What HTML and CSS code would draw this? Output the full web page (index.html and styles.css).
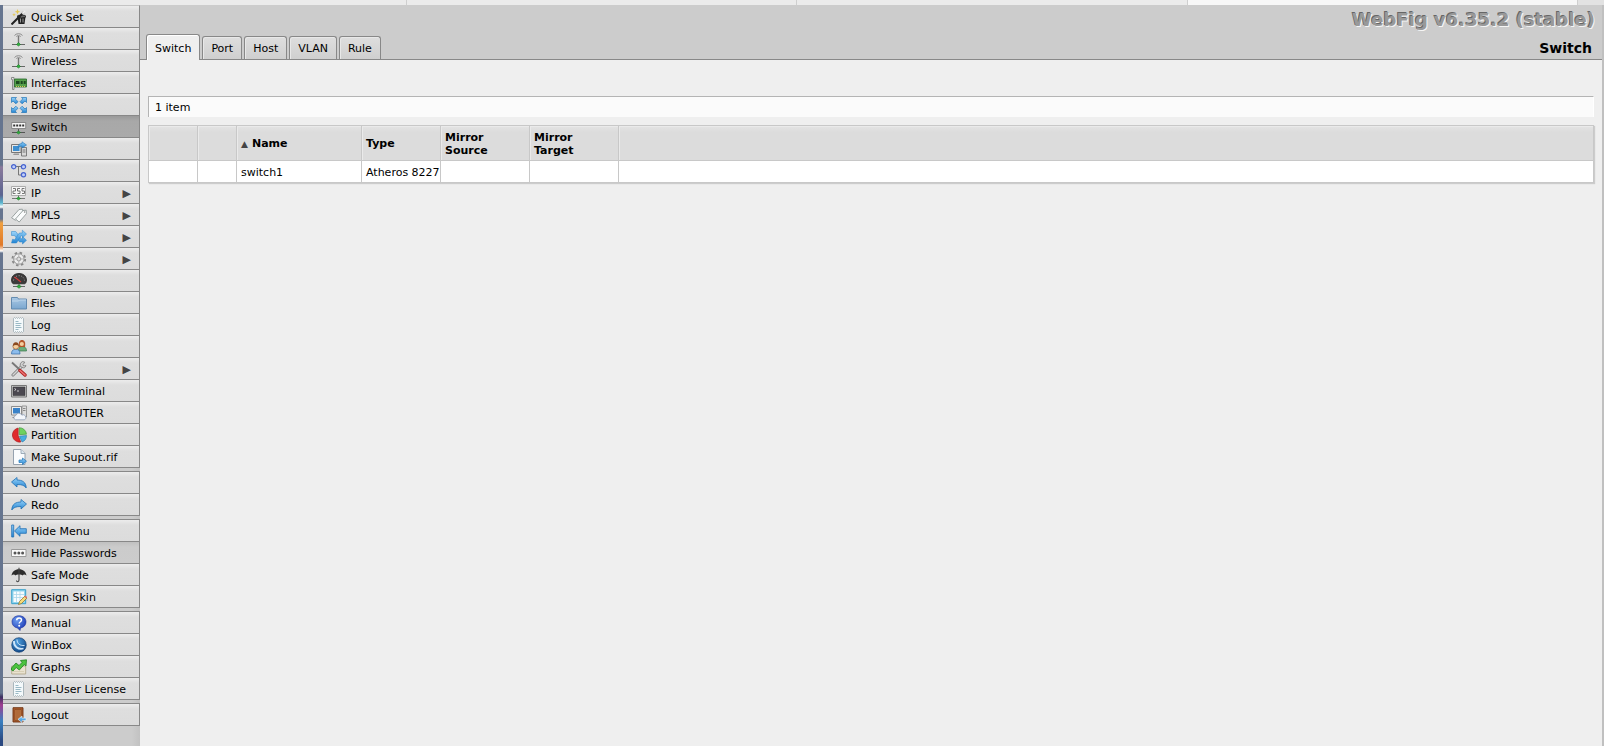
FILE: index.html
```
<!DOCTYPE html>
<html lang="en">
<head>
    <meta charset="UTF-8">
    <meta name="viewport" content="width=device-width, initial-scale=1.0">
    <title>WebFig - Switch</title>
    <link rel="stylesheet" href="styles.css">
</head>
<body>

    <!-- shared gradients and icons -->
    <svg class="defs" aria-hidden="true">
        <defs>
            <linearGradient id="blue" x1="0" y1="0" x2="0" y2="1">
                <stop offset="0" stop-color="#9bd4fa"/>
                <stop offset="1" stop-color="#2384d2"/>
            </linearGradient>
            <linearGradient id="folder" x1="0" y1="0" x2="0" y2="1">
                <stop offset="0" stop-color="#a9c8e4"/>
                <stop offset="1" stop-color="#7ba7cf"/>
            </linearGradient>
            <radialGradient id="ball" cx=".35" cy=".3" r=".8">
                <stop offset="0" stop-color="#6d9df0"/>
                <stop offset="1" stop-color="#1430b0"/>
            </radialGradient>
            <radialGradient id="globe" cx=".4" cy=".3" r=".8">
                <stop offset="0" stop-color="#4fa0e0"/>
                <stop offset="1" stop-color="#0b3f80"/>
            </radialGradient>
        </defs>
        <symbol id="i-antenna" viewBox="0 0 16 16">
            <path d="M3.500 4.500a4.800 4 0 0 1 8 0M5.300 5.500a2.800 2.300 0 0 1 4.400 0" fill="none" stroke="#8c8c8c" stroke-width="1"/>
            <path d="M7.500 5v8" stroke="#777" stroke-width="1.400"/>
            <path d="M1 13.500h13" stroke="#666"/>
            <path d="M5.500 13.500l2-2 2 2-2 1.500z" fill="#2fae3c" stroke="#1b7a28" stroke-width=".6"/>
        </symbol>
        <symbol id="i-log" viewBox="0 0 16 16">
            <path d="M2.500 1.500l1-1 1 1 1-1 1 1 1-1 1 1 1-1 1 1 1-1 1 1v13l-1 1-1-1-1 1-1-1-1 1-1-1-1 1-1-1-1 1-1-1z" fill="#f4f9fb" stroke="#9aa9b0" stroke-width=".8"/>
            <path d="M4.500 4.500h3M4.500 6.500h6M4.500 8.500h5M4.500 10.500h6M4.500 12.500h3" stroke="#8fb0bd" stroke-width=".9"/>
        </symbol>
        <symbol id="i-undo" viewBox="0 0 16 16">
            <path d="M.5 7L6 2.500V5c5.200 0 9 2 9.200 8-1.500-2.500-4.200-3.500-9.200-3.500V12z" fill="url(#blue)" stroke="#1e6eb4" stroke-width=".8" stroke-linejoin="round"/>
        </symbol>
    </svg>

    <div class="browser-tabs">
        <span class="bt bt-first"></span>
        <span class="bt"></span>
        <span class="bt"></span>
        <span class="bt bt-active"></span>
        <span class="bt bt-end"></span>
    </div>

    <div class="page">
        <nav class="menu">
            <div class="group">
                <a class="item" href="#quickset"><svg class="icon" viewBox="0 0 16 16"><path d="M6.500 7.500h8l-1 7.500h-6z" fill="#222"/><ellipse cx="10.500" cy="7.500" rx="4.500" ry="1.400" fill="#666" stroke="#111" stroke-width=".7"/><path d="M.5 15.500L13 3" stroke="#222" stroke-width="2"/><path d="M11.300 4.700L14 2" stroke="#eee" stroke-width="2"/><path d="M9.500 9.500v4M12 9.500v4" stroke="#999"/><path d="M6.500 0l.7 2 2 .7-2 .7-.7 2-.7-2-2-.7 2-.7zM3 4l.5 1.300 1.300.5-1.300.5L3 7.600l-.5-1.300-1.300-.5 1.300-.5z" fill="#e4c64c"/></svg>Quick Set</a>
                <a class="item" href="#capsman"><svg class="icon"><use href="#i-antenna"/></svg>CAPsMAN</a>
                <a class="item" href="#wireless"><svg class="icon"><use href="#i-antenna"/></svg>Wireless</a>
                <a class="item" href="#interfaces"><svg class="icon" viewBox="0 0 16 16"><path d="M.5 2.500h2.500v12H1.500v-10h-1z" fill="#e8e8e8" stroke="#777" stroke-width=".8"/><path d="M3.500 4h12v8h-12z" fill="#55a04b" stroke="#24682a" stroke-width=".8"/><path d="M5 6h3.500v3H5zM9.700 6h2v3h-2zM12.700 6h2v3h-2z" fill="#1d4a20"/><path d="M5 11.500h9" stroke="#d9c85a" stroke-dasharray="1 1"/></svg>Interfaces</a>
                <a class="item" href="#bridge"><svg class="icon" viewBox="0 0 16 16"><g fill="url(#blue)" stroke="#2375b8" stroke-width=".7"><path d="M.5.500h5L4.200 1.900 7 4.700 4.900 6.800 2 4 .5 5.500z"/><path d="M15.500.500v5L14 4l-2.900 2.800L9 4.700l2.800-2.800L10.500.500z"/><path d="M.5 15.500v-5L2 12l2.900-2.800L7 11.300l-2.800 2.800 1.300 1.400z"/><path d="M15.500 15.500h-5l1.300-1.400L9 11.300l2.100-2.100L14 12l1.500-1.500z"/></g></svg>Bridge</a>
                <a class="item item-active" href="#switch"><svg class="icon" viewBox="0 0 16 16"><path d="M.7 3.500h14v6H.7z" fill="#f5f5f5" stroke="#777" stroke-width=".8"/><path d="M2.200 6.500h11" stroke="#333" stroke-width="2" stroke-dasharray="2 1"/><path d="M7.500 10v3M1 13.500h13" stroke="#555"/><path d="M5.500 13.500l2-1.500 2 1.500-2 1.500z" fill="#2fae3c" stroke="#1b7a28" stroke-width=".6"/></svg>Switch</a>
                <a class="item" href="#ppp"><svg class="icon" viewBox="0 0 16 16"><path d="M.5 3.500h9.500v8H.5z" fill="#e6e6e6" stroke="#777"/><path d="M2 5h6.500v5H2z" fill="#3d8fd0"/><path d="M3 12.500h5v1.500H2z" fill="#999"/><path d="M10.500 6.500h5v8.500h-5z" fill="#d8d8d8" stroke="#666" stroke-width=".8"/><path d="M11.500 9h3M11.500 11h3" stroke="#777"/><path d="M7 6.500c0-3 1.500-4 4-4V.800L15.500 4 11 7V5.200c-1.500 0-2.500.3-4 1.300z" fill="url(#blue)" stroke="#2375b8" stroke-width=".6"/></svg>PPP</a>
                <a class="item" href="#mesh"><svg class="icon" viewBox="0 0 16 16"><path d="M5 3.500h5M7.500 3.500v8.500h3" fill="none" stroke="#777"/><g fill="#c3d0f8" stroke="#4663cf" stroke-width="1.200"><circle cx="2.700" cy="3.700" r="2.100"/><circle cx="12.500" cy="3.700" r="2.100"/><circle cx="12.500" cy="11.700" r="2.100"/></g></svg>Mesh</a>
                <a class="item" href="#ip"><svg class="icon" viewBox="0 0 16 16"><path d="M.5 1.500h14v9H.5z" fill="#f7f7f7" stroke="#a5a5a5" stroke-width=".9"/><path d="M2 3.500h2.500v2.500H2v2.500h2.500M9 3.500H6.500V6H9v2.500H6.500M13.500 3.500H11V6h2.500v2.500H11" fill="none" stroke="#666" stroke-width=".9"/><path d="M7.500 10.500v3M1 13.500h13" stroke="#777"/><path d="M5.500 13.500l2-1.500 2 1.500-2 1.500z" fill="#2fae3c" stroke="#1b7a28" stroke-width=".6"/></svg>IP<span class="more">▶</span></a>
                <a class="item" href="#mpls"><svg class="icon" viewBox="0 0 16 16"><path d="M.6 10.800L8 2.500l3.300-.3L12 5l-7.500 8.300z" fill="#f7f9f9" stroke="#87908f" stroke-width=".8" stroke-linejoin="round"/><path d="M4.500 12L12 3.500l3.200-.3.200 3.500L8.200 15z" fill="#fcfdfd" stroke="#87908f" stroke-width=".8" stroke-linejoin="round"/><circle cx="13.600" cy="5" r=".8" fill="#888"/></svg>MPLS<span class="more">▶</span></a>
                <a class="item" href="#routing"><svg class="icon" viewBox="0 0 16 16"><g fill="url(#blue)" stroke="#2b84c8" stroke-width=".5"><path d="M.5 2.500h4.200l5.600 7.200h1.200V7.500l4 3.800-4 3.700v-2H8.500L3.500 6.500h-3z"/><path d="M.5 14l1-3.800 2.200.5L8.300 4h3V1.200L15.500 5l-4 3.800v-2H9.900L5.500 14z"/></g></svg>Routing<span class="more">▶</span></a>
                <a class="item" href="#system"><svg class="icon" viewBox="0 0 16 16"><circle cx="7.800" cy="8" r="6.400" fill="none" stroke="#888" stroke-width="1.800" stroke-dasharray="2.500 2.530"/><circle cx="7.800" cy="8" r="5.200" fill="#ededed" stroke="#888" stroke-width=".8"/><circle cx="7.800" cy="8" r="2" fill="#dedede" stroke="#888" stroke-width=".8"/><path d="M7.800 3v3M7.800 10v3M3 8h3M10 8h3" stroke="#aaa" stroke-width=".8"/></svg>System<span class="more">▶</span></a>
                <a class="item" href="#queues"><svg class="icon" viewBox="0 0 16 16"><path d="M.5 7C.5 2.800 4 .500 8 .500S15.500 2.800 15.500 7c0 2-1 3.800-2 3.800H2.500C1.500 10.800.5 9 .5 7z" fill="#3c3a3a" stroke="#222" stroke-width=".8"/><path d="M2.500 7.500C3 4.500 5 2.700 8 2.700s5 1.800 5.500 4.800" fill="none" stroke="#999" stroke-dasharray="1 1.500"/><path d="M3.500 4l6.500 5" stroke="#d23a3a" stroke-width="1.100"/><path d="M8 11v3M2 13.500h12" stroke="#666"/><path d="M5.800 13.500L8 11.800l2.200 1.700L8 15.300z" fill="#2fae3c" stroke="#1b7a28" stroke-width=".6"/></svg>Queues</a>
                <a class="item" href="#files"><svg class="icon" viewBox="0 0 16 16"><path d="M.5 14V2.500h6l1 1.500h8v10z" fill="url(#folder)" stroke="#5a83aa" stroke-width=".9"/><path d="M1 6h6.500l1-1H15" fill="none" stroke="#c7dcee" stroke-width=".8"/></svg>Files</a>
                <a class="item" href="#log"><svg class="icon"><use href="#i-log"/></svg>Log</a>
                <a class="item" href="#radius"><svg class="icon" viewBox="0 0 16 16"><path d="M7.500 12c0-3 1-4.500 3.500-4.500s4.500 1 4.500 4.500z" fill="#6cae7a" stroke="#37774a" stroke-width=".7"/><path d="M8 8c-.8-5 .5-7 3-7s3.800 2 3 7z" fill="#b3562b"/><circle cx="10.800" cy="5" r="2.100" fill="#f4cf9f"/><path d="M.5 15c0-3.500 1.500-4.700 4.300-4.700S9 11.500 9 15z" fill="#8cbcec" stroke="#376ba5" stroke-width=".7"/><circle cx="4.800" cy="7.300" r="2.900" fill="#f4cf9f" stroke="#9b5a2a" stroke-width=".7"/><path d="M1.900 7c0-2.500 1-3.700 3-3.700S7.800 4.500 7.800 7C6.500 6 4 5.500 1.900 7z" fill="#8b4a20"/></svg>Radius</a>
                <a class="item" href="#tools"><svg class="icon" viewBox="0 0 16 16"><path d="M2 14L11 5" stroke="#777" stroke-width="3" stroke-linecap="round"/><path d="M2 14L11 5" stroke="#d5d5d5" stroke-width="1.500" stroke-linecap="round"/><path d="M13.800 1.200a3 3 0 1 0 1.200 3.300l-2.200.5-1-1.200z" fill="#d0d0d0" stroke="#777" stroke-width=".8"/><path d="M1 1.500l7.500 7" stroke="#777" stroke-width="1.800"/><path d="M9 9.500l5 4.500" stroke="#b02524" stroke-width="3.400" stroke-linecap="round"/><path d="M9 9.500l5 4.500" stroke="#ee7473" stroke-width="1.600" stroke-linecap="round"/></svg>Tools<span class="more">▶</span></a>
                <a class="item" href="#terminal"><svg class="icon" viewBox="0 0 16 16"><path d="M.5 2.500h15v11.500H.5z" fill="#c9c9c9" stroke="#777"/><path d="M2 4h12v8.500H2z" fill="#4b4850" stroke="#333" stroke-width=".5"/><path d="M3.500 5.500l1.500 1-1.500 1M6 8h2" fill="none" stroke="#eee" stroke-width=".8"/></svg>New Terminal</a>
                <a class="item" href="#metarouter"><svg class="icon" viewBox="0 0 16 16"><path d="M11 1h4.500v11H11z" fill="#ddd" stroke="#888" stroke-width=".8"/><path d="M12 3.500h2.500M12 5.500h2.500" stroke="#888"/><path d="M.5 1.500h10v8.500H.5z" fill="#eee" stroke="#777" stroke-width=".8"/><path d="M2 3h7v5.500H2z" fill="#3982c9"/><path d="M1.500 12.500h3" stroke="#888"/><path d="M4.500 14.800a2.200 2.200 0 0 1 .3-4.300 3.200 3.200 0 0 1 6-.4 2.400 2.400 0 0 1 2.700 4.700z" fill="#f3f6fb" stroke="#8c9cb4" stroke-width=".8"/></svg>MetaROUTER</a>
                <a class="item" href="#partition"><svg class="icon" viewBox="0 0 16 16"><path d="M7.200 1v7.500l2.600 6.500A7 7 0 0 1 7.200 1z" fill="#e02a2c" stroke="#a31518" stroke-width=".6"/><path d="M8.300.700a7.200 7.200 0 0 1 7.200 6.500l-7.200.5z" fill="#6ed15f" stroke="#379434" stroke-width=".6"/><path d="M8.500 9.200l7-.7c0 3-1.500 5.500-4.500 6.500z" fill="#47aee2" stroke="#2377a8" stroke-width=".6"/></svg>Partition</a>
                <a class="item" href="#supout"><svg class="icon" viewBox="0 0 16 16"><path d="M2.500.500h7.500l4 4v11H2.500z" fill="#fafcfe" stroke="#8c9aa8" stroke-width=".9"/><path d="M10 .500v4h4" fill="#dde8f0" stroke="#8c9aa8" stroke-width=".8"/><path d="M8 11h3.500V9l4 3.200-4 3.300v-2H8z" fill="url(#blue)" stroke="#2375b8" stroke-width=".7"/></svg>Make Supout.rif</a>
            </div>
            <div class="group">
                <button class="item" type="button"><svg class="icon"><use href="#i-undo"/></svg>Undo</button>
                <button class="item" type="button"><svg class="icon flip"><use href="#i-undo"/></svg>Redo</button>
            </div>
            <div class="group">
                <button class="item" type="button"><svg class="icon" viewBox="0 0 16 16"><path d="M.7 2h2v12h-2zM3.500 8L9 2.700v3h6.300v4.600H9v3z" fill="url(#blue)" stroke="#1e6eb4" stroke-width=".8"/></svg>Hide Menu</button>
                <button class="item item-pressed" type="button" aria-pressed="true"><svg class="icon" viewBox="0 0 16 16"><path d="M.5 4.500h14.500v7H.5z" fill="#fafafa" stroke="#999"/><circle cx="4" cy="8" r="1.500" fill="#555"/><circle cx="7.800" cy="8" r="1.500" fill="#555"/><circle cx="11.600" cy="8" r="1.500" fill="#555"/></svg>Hide Passwords</button>
                <button class="item" type="button"><svg class="icon" viewBox="0 0 16 16"><path d="M.5 8.500C1 4.500 4 2.200 8 2.200s7 2.300 7.500 6.300c-1.500-1.300-3-1.300-4 0-1-1.200-6-1.200-7 0-1-1.300-2.500-1.300-4 0z" fill="#2d2d2d"/><path d="M8 .800V13c0 2.200-2.500 2.200-2.500.500" fill="none" stroke="#444" stroke-width="1.100"/></svg>Safe Mode</button>
                <button class="item" type="button"><svg class="icon" viewBox="0 0 16 16"><path d="M.7.700h14v14H.7z" fill="#8fd4ee" stroke="#2c9cc8" stroke-width=".9"/><path d="M2.500 2.500h10.500v10.500H2.500z" fill="#f7fbfd"/><path d="M2.500 5.500h10.500M2.500 8.500h10.500M5.500 2.500v10.500M9 2.500v10.500" stroke="#a9d6e8" stroke-width=".8"/><path d="M7.500 15.500l1-3L14 7l2 2-5.500 5.500z" fill="#f6dc7a" stroke="#8f6a1c" stroke-width=".7"/><path d="M13.300 7.700L14.500 6.500l1.500 1.500-1 1.200z" fill="#e26a6a"/></svg>Design Skin</button>
            </div>
            <div class="group">
                <a class="item" href="#manual"><svg class="icon" viewBox="0 0 16 16"><path d="M8 .800c4.200 0 7 2.600 7 6s-2.300 5.700-5.500 6.200L9 15.500 6.500 13C3 12.300 1 10 1 6.800c0-3.400 2.800-6 7-6z" fill="url(#ball)" stroke="#1b2f9a" stroke-width=".6"/><path d="M5.700 5.200c0-3 4.800-3 4.800-.2 0 1.800-2.300 1.700-2.300 3.500" fill="none" stroke="#fff" stroke-width="1.500"/><circle cx="8.200" cy="10.700" r="1" fill="#fff"/></svg>Manual</a>
                <a class="item" href="#winbox"><svg class="icon" viewBox="0 0 16 16"><circle cx="8" cy="8" r="7.300" fill="url(#globe)" stroke="#0e3768" stroke-width=".6"/><path d="M3 4c-.5 5 4 9 9.500 7.500" fill="none" stroke="#cfe6fa" stroke-width="1.800"/><path d="M6 2.500c0 4 3 6.500 7.500 6" fill="none" stroke="#cfe6fa" stroke-width="1"/></svg>WinBox</a>
                <a class="item" href="#graphs"><svg class="icon" viewBox="0 0 16 16"><path d="M.7 7h14v8H.7z" fill="#e9e2d0" stroke="#aca183" stroke-width=".8"/><path d="M2 12.500h11" stroke="#cfc5a8" stroke-width=".7"/><path d="M.5 9L5 4 8 6.500l3-3L9.500 1.500 15.500.800 15 7l-1.700-1.500-5 5.500-3.100-2.500L2 12 .5 11z" fill="#4cc33f" stroke="#1f8120" stroke-width=".8"/></svg>Graphs</a>
                <a class="item" href="#license"><svg class="icon"><use href="#i-log"/></svg>End-User License</a>
            </div>
            <div class="group">
                <a class="item" href="#logout"><svg class="icon" viewBox="0 0 16 16"><path d="M2 .700h10V15H2z" fill="#a85a2c" stroke="#6f3412" stroke-width=".9"/><path d="M4 2.500h6v11H4z" fill="#c9804a" stroke="#7c3f1b" stroke-width=".6"/><path d="M6 3v10M8 3v10" stroke="#8c4a22" stroke-width=".8"/><path d="M7 12.300l4-3.300v2h4v2.600h-4v2z" fill="url(#blue)" stroke="#eaf5fd" stroke-width=".6"/></svg>Logout</a>
            </div>
        </nav>

        <main class="content">
            <header class="top">
                <div class="tabs" role="tablist">
                    <button class="tab tab-active" type="button" role="tab" aria-selected="true">Switch</button>
                    <button class="tab" type="button" role="tab">Port</button>
                    <button class="tab" type="button" role="tab">Host</button>
                    <button class="tab" type="button" role="tab">VLAN</button>
                    <button class="tab" type="button" role="tab">Rule</button>
                </div>
                <div class="brand">
                    <div class="version">WebFig v6.35.2 (stable)</div>
                    <h1 class="title">Switch</h1>
                </div>
            </header>

            <div class="body">
                <div class="count">1 item</div>
                <table class="list">
                    <colgroup>
                        <col class="c-btn">
                        <col class="c-flag">
                        <col class="c-name">
                        <col class="c-type">
                        <col class="c-mirror">
                        <col class="c-mirror">
                        <col>
                    </colgroup>
                    <thead>
                        <tr>
                            <th></th>
                            <th></th>
                            <th><span class="sort">▲</span>Name</th>
                            <th>Type</th>
                            <th>Mirror Source</th>
                            <th>Mirror Target</th>
                            <th></th>
                        </tr>
                    </thead>
                    <tbody>
                        <tr>
                            <td></td>
                            <td></td>
                            <td>switch1</td>
                            <td>Atheros 8227</td>
                            <td></td>
                            <td></td>
                            <td></td>
                        </tr>
                    </tbody>
                </table>
            </div>
        </main>
    </div>

</body>
</html>
```
FILE: styles.css
```
* {
    box-sizing: border-box;
}
body {
    display: flex;
    flex-direction: column;
    min-height: 100vh;
    margin: 0;
    background-color: #efefef;
    color: #000;
    font-family: Verdana, "DejaVu Sans", sans-serif;
    font-size: 11px;
}
.defs {
    position: absolute;
    width: 0;
    height: 0;
}

/* strip above the page */
.browser-tabs {
    display: flex;
    height: 5px;
    background-color: #ebebeb;
}
.bt {
    flex: 1 1 24%;
    border-right: 1px solid #cfcfcf;
}
.bt-first {
    flex-basis: 25%;
}
.bt-active {
    background-color: #f7f7f7;
}
.bt-end {
    flex: 0 0 26px;
    border-right: none;
    background-color: #e2e2e2;
}

/* desktop shows through on the left edge */
.page {
    display: flex;
    flex: 1;
    padding-left: 3px;
    border-right: 2px solid #c0c0c0;
    background: linear-gradient(#66758f 160px, #8a7a9c 162px, #5b6490 190px, #5ab8d0 198px, #fff 202px, #66758f 204px, #66758f 214px, #f0a040 218px, #e07828 240px, #fff 246px, #66758f 248px, #66758f 688px, #3c3060 692px, #a03c90 700px, #3a80c0 716px, #2a4880 736px);
}

/* left menu */
.menu {
    flex: none;
    width: 137px;
    background: linear-gradient(to right, #ccc 94%, #c2c2c2);
}
.group {
    margin-bottom: 3px;
    border-top: 1px solid #888;
    border-right: 1px solid #888;
}
.group:first-child {
    border-top-color: #c4c4c4;
}
.item {
    display: flex;
    align-items: center;
    gap: 4px;
    width: 100%;
    height: 22px;
    padding: 1px 8px 0;
    border: none;
    border-bottom: 1px solid #888;
    background: linear-gradient(#ececec, #dedede 5px, #dcdcdc);
    color: #000;
    font: inherit;
    text-align: left;
    text-decoration: none;
    white-space: nowrap;
    cursor: pointer;
}
.item:hover {
    background: #e8e8e8;
}
.item-active,
.item-active:hover {
    background: linear-gradient(#9a9a9a, #a8a8a8 5px, #aaa);
}
.item-pressed,
.item-pressed:hover {
    background: linear-gradient(#c0c0c0, #cbcbcb 5px, #ccc);
}
.icon {
    flex: none;
    width: 16px;
    height: 16px;
}
.flip {
    transform: scaleX(-1);
}
.more {
    margin-left: auto;
    color: #444;
}

/* header with tabs */
.content {
    flex: 1;
    min-width: 0;
    background-color: #efefef;
}
.top {
    display: flex;
    justify-content: space-between;
    align-items: flex-end;
    height: 55px;
    padding: 0 7px 0 6px;
    border-bottom: 1px solid #888;
    background-color: #ccc;
}
.tabs {
    display: flex;
    align-items: flex-end;
    gap: 2px;
}
.tab {
    height: 23px;
    padding: 1px 8px 0;
    border: 1px solid #888;
    border-bottom: none;
    border-radius: 3px 3px 0 0;
    background: linear-gradient(#dedede, #cfcfcf);
    box-shadow: inset 1px 1px #e8e8e8;
    color: #000;
    font: inherit;
    cursor: pointer;
}
.tab-active {
    height: 26px;
    margin-bottom: -1px;
    background: #efefef;
    box-shadow: inset 1px 1px #fff;
}
.brand {
    align-self: flex-start;
    text-align: right;
}
.version {
    margin-top: 3px;
    color: #999;
    font-size: 18px;
    font-weight: bold;
    line-height: 24px;
    text-shadow: -1px -1px #666, 1px 1px #f5f5f5;
}
.title {
    margin: 7px 3px 0 0;
    font-size: 14px;
    line-height: 18px;
}

/* item list */
.body {
    padding: 36px 8px 8px;
}
.count {
    height: 21px;
    padding: 0 6px;
    border-top: 1px solid #b4b4b4;
    border-left: 1px solid #b4b4b4;
    border-right: 1px solid #fff;
    background-color: #fbfbfb;
    line-height: 21px;
}
.list {
    width: 100%;
    margin-top: 8px;
    table-layout: fixed;
    border-collapse: separate;
    border-spacing: 0;
    border: 1px solid #c8c8c8;
    border-left: none;
    background-color: #fff;
    box-shadow: 1px 1px 1px #ccc;
}
.c-btn {
    width: 49px;
}
.c-flag {
    width: 39px;
}
.c-name {
    width: 125px;
}
.c-type {
    width: 79px;
}
.c-mirror {
    width: 89px;
}
.list th,
.list td {
    padding: 1px 0 0 4px;
    border-left: 1px solid #c8c8c8;
    text-align: left;
    vertical-align: middle;
}
.list th {
    height: 35px;
    padding-right: 8px;
    border-bottom: 1px solid #c8c8c8;
    background: linear-gradient(#e4e4e4, #dcdcdc 6px);
    box-shadow: inset 1px 1px #eaeaea;
    line-height: 13px;
}
.list td {
    height: 21px;
    white-space: nowrap;
}
.sort {
    margin-right: 4px;
    color: #444;
    font-size: 9px;
}
```
